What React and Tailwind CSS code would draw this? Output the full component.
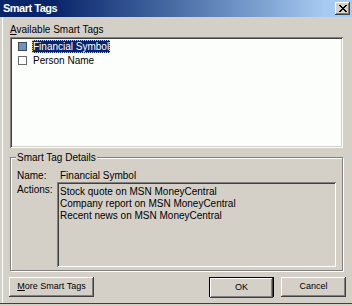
export default function App() {
  const btn =
    "h-[20px] bg-[#d4d0c8] flex items-center justify-center text-[9px] shadow-[inset_-1px_-1px_#404040,inset_1px_1px_#ffffff,inset_-2px_-2px_#808080,inset_2px_2px_#d4d0c8]";
  return (
    <div className="w-[352px] h-[306px] bg-[#d4d0c8] flex flex-col overflow-hidden text-[10px] text-black font-['Liberation_Sans',Arial,sans-serif]">
      {/* Title bar */}
      <div className="h-[17px] shrink-0 flex items-center justify-between pl-[3px] pr-[2px] bg-linear-to-r from-[#0a246a] from-15% to-[#a6caf0] to-92%">
        <span className="text-white font-bold text-[11px] tracking-[-0.5px] leading-[17px]">Smart Tags</span>
        <div className="w-[15px] h-[13px] bg-[#d4d0c8] flex items-center justify-center shadow-[inset_-1px_-1px_#404040,inset_1px_1px_#ffffff,inset_-2px_-2px_#808080,inset_2px_2px_#d4d0c8]">
          <svg width="8" height="7" viewBox="0 0 8 7" shapeRendering="crispEdges">
            <path
              fill="#000"
              d="M0 0h2v1h1v1h2V1h1V0h2v1H7v1H6v1H5v1h1v1h1v1h1v1H6V6H5V5H3v1H2v1H0V6h1V5h1V4h1V3H2V2H1V1H0z"
            />
          </svg>
        </div>
      </div>

      {/* Body */}
      <div className="flex-1 ml-[2px] border-l border-white pl-[7px] pr-[9px] flex flex-col">
        <div className="mt-[7px] leading-[12px]">
          <span className="underline">A</span>vailable Smart Tags
        </div>
        <div className="mt-[1px] h-[111px] bg-[#fcfefc] shadow-[inset_1px_1px_#808080,inset_-1px_-1px_#ffffff,inset_2px_2px_#404040,inset_-2px_-2px_#d4d0c8] p-[2px]">
          <div className="flex items-center h-[14px] pl-[6px]">
            <div className="w-[9px] h-[9px] bg-[#7090c8] border border-[#404850]" />
            <span className="ml-[5px] px-[1px] leading-[13px] bg-[#0a246a] text-white outline-1 outline-dotted outline-[#f0d070] -outline-offset-1">
              Financial Symbol
            </span>
          </div>
          <div className="flex items-center h-[14px] pl-[6px]">
            <div className="w-[9px] h-[9px] bg-white border border-[#6a6a6a]" />
            <span className="ml-[6px] leading-[13px]">Person Name</span>
          </div>
        </div>

        {/* Group box */}
        <div className="relative mt-[9px] h-[114px] border border-[#808080] shadow-[inset_1px_1px_#ffffff,1px_1px_#ffffff] pl-[6px] pr-[6px] pt-[12px]">
          <div className="absolute -top-[6px] left-[5px] px-[1px] bg-[#d4d0c8] leading-[12px]">Smart Tag Details</div>
          <div className="flex leading-[12px]">
            <div className="w-[40px]">Name:</div>
            <div className="pl-[3px]">Financial Symbol</div>
          </div>
          <div className="flex">
            <div className="w-[40px] mt-[2px] leading-[12px]">Actions:</div>
            <div className="flex-1 h-[85px] shadow-[inset_1px_1px_#808080,inset_-1px_-1px_#ffffff,inset_2px_2px_#404040,inset_-2px_-2px_#d4d0c8] pt-[4px] pl-[3px] leading-[12px]">
              <div>Stock quote on MSN MoneyCentral</div>
              <div>Company report on MSN MoneyCentral</div>
              <div>Recent news on MSN MoneyCentral</div>
            </div>
          </div>
        </div>

        {/* Buttons */}
        <div className="mt-[6px] -ml-[1px] w-[337px] flex justify-between">
          <div className={btn + " w-[85px]"}>
            <span>
              <span className="underline">M</span>ore Smart Tags
            </span>
          </div>
          <div className="flex gap-[7px]">
            <div className="w-[65px] h-[20px] border border-black">
              <div className={btn + " h-[18px]"}>OK</div>
            </div>
            <div className={btn + " w-[65px]"}>Cancel</div>
          </div>
        </div>
      </div>
      <div className="h-[1px] shrink-0 bg-[#404040]" />
      <div className="h-[2px] shrink-0 bg-[#d4d0c8]" />
    </div>
  );
}
